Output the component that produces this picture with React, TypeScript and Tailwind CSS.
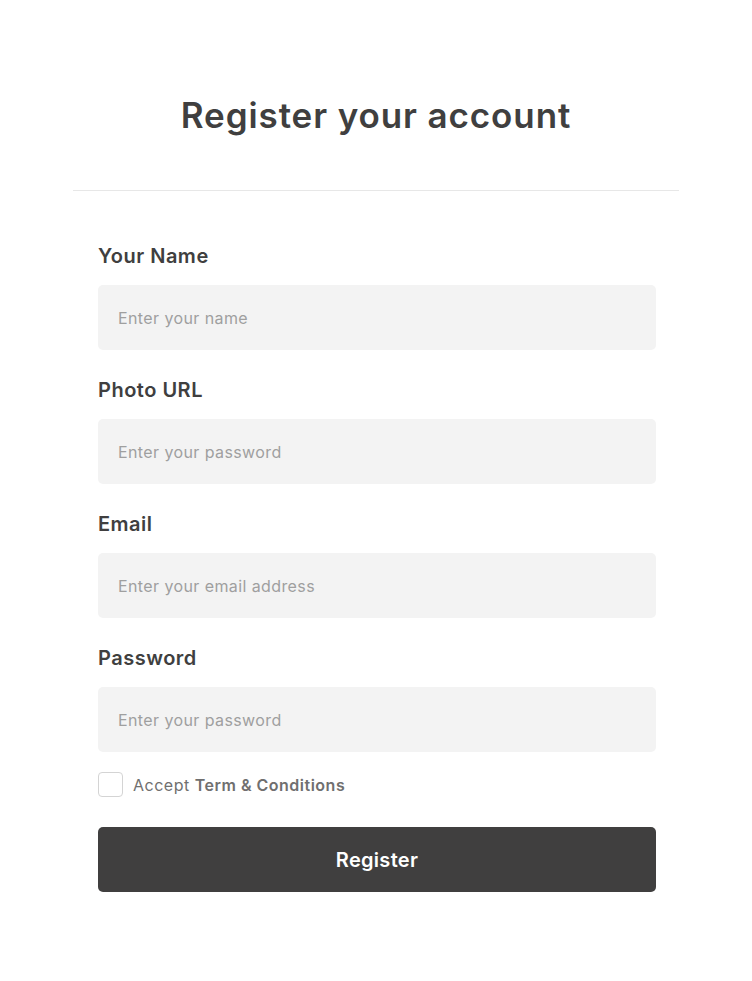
import React from 'react';

const fields = [
  { label: 'Your Name', placeholder: 'Enter your name', type: 'text' },
  { label: 'Photo URL', placeholder: 'Enter your password', type: 'text' },
  { label: 'Email', placeholder: 'Enter your email address', type: 'email' },
  { label: 'Password', placeholder: 'Enter your password', type: 'password' },
];

const App: React.FC = () => {
  return (
    <div className="min-h-screen bg-white font-['Inter','Noto_Sans',sans-serif]">
      <div className="w-[606px] mx-auto pt-[90px] pb-20">
        {/* Heading */}
        <h1 className="text-center text-[35px] leading-[50px] font-semibold text-[#403f3f] tracking-[0.9px]">
          Register your account
        </h1>
        <div className="mt-[50px] border-t border-[#e7e7e7]" />

        {/* Form */}
        <form className="pl-[25px] pr-[23px] pt-[50px]" onSubmit={(e) => e.preventDefault()}>
          <div className="flex flex-col gap-[25px]">
            {fields.map((f) => (
              <div key={f.label} className="flex flex-col gap-[14px]">
                <label className="text-[20px] leading-[30px] font-semibold text-[#403f3f] tracking-[0.5px]">
                  {f.label}
                </label>
                <input
                  type={f.type}
                  placeholder={f.placeholder}
                  className="h-[65px] w-full rounded-[5px] bg-[#f3f3f3] px-5 text-base tracking-[0.4px] text-[#403f3f] placeholder:text-[#9f9f9f] outline-none"
                />
              </div>
            ))}
          </div>

          <label className="mt-5 flex items-center gap-[10px] text-base tracking-[0.5px] text-[#706f6f]">
            <input
              type="checkbox"
              className="h-[25px] w-[25px] appearance-none rounded-[4px] border border-[#d4d4d4] bg-white"
            />
            <span>
              Accept <span className="font-semibold">Term &amp; Conditions</span>
            </span>
          </label>

          <button
            type="submit"
            className="mt-[30px] h-[65px] w-full rounded-[5px] bg-[#403f3f] text-[20px] font-semibold tracking-[0.3px] text-white"
          >
            Register
          </button>
        </form>
      </div>
    </div>
  );
};

export default App;
